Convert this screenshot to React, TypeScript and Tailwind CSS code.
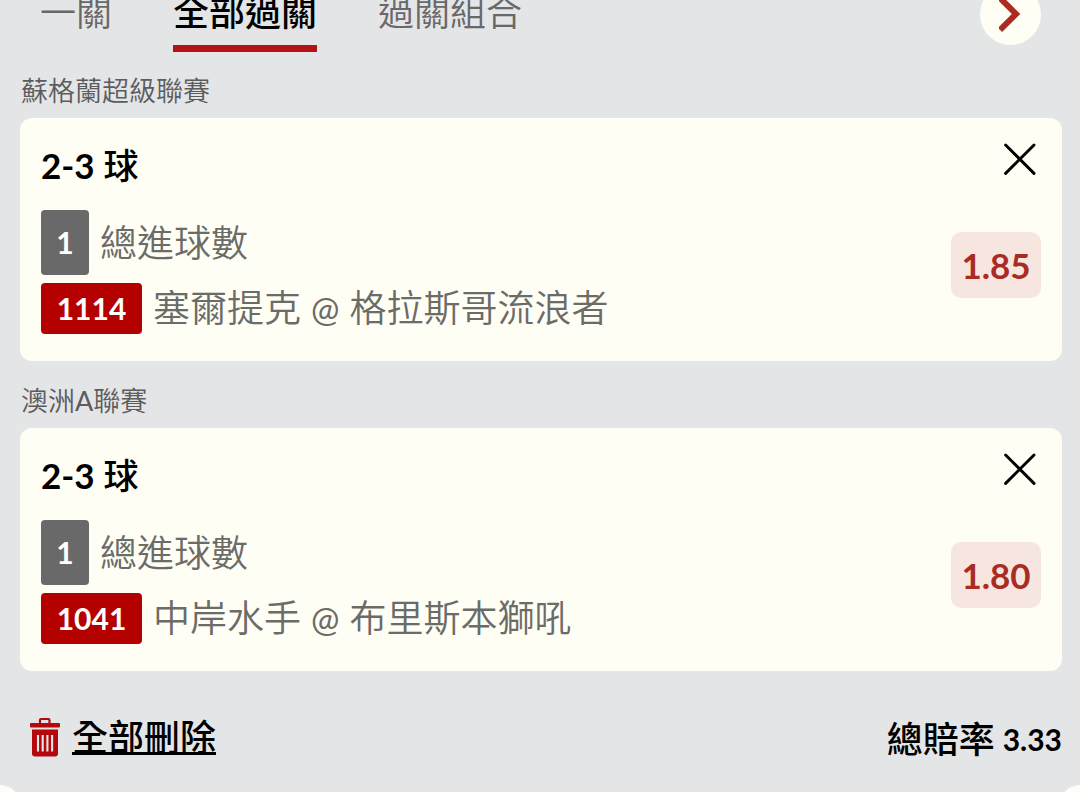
import React from "react";

type Bet = {
  league: React.ReactNode;
  range: string;
  leg: string;
  market: string;
  code: string;
  home: string;
  away: string;
  odds: string;
};

const bets: Bet[] = [
  { league: "蘇格蘭超級聯賽", range: "2-3", leg: "1", market: "總進球數", code: "1114", home: "塞爾提克", away: "格拉斯哥流浪者", odds: "1.85" },
  {
    league: (
      <>
        澳洲<span className="font-normal">A</span>聯賽
      </>
    ),
    range: "2-3",
    leg: "1",
    market: "總進球數",
    code: "1041",
    home: "中岸水手",
    away: "布里斯本獅吼",
    odds: "1.80",
  },
];

const tabs = [
  { label: "一關", active: false },
  { label: "全部過關", active: true },
  { label: "過關組合", active: false },
];

function CloseIcon() {
  return (
    <svg viewBox="0 0 32 32" className="size-8" fill="none" stroke="#000" strokeWidth="2.9" strokeLinecap="round" aria-hidden="true">
      <path d="M1.6 2 30 30.4M30 2 1.6 30.4" />
    </svg>
  );
}

function TrashIcon() {
  return (
    <svg viewBox="0 0 32 40" className="h-10 w-8" aria-hidden="true">
      <path d="M12 7V3.2Q12 2 13.2 2H20.3Q21.5 2 21.5 3.2V7" fill="none" stroke="#b5080c" strokeWidth="2.2" />
      <path d="M3 6H31Q32 6 32 7V9.5Q32 10.5 31 10.5H3Q2 10.5 2 9.5V7Q2 6 3 6Z" fill="#b5080c" />
      <path d="M4 12.5H30V36.5Q30 39.5 27 39.5H7Q4 39.5 4 36.5Z" fill="#b5080c" />
      <path d="M10 18V34.5M14.7 18V34.5M19.4 18V34.5M24.1 18V34.5" stroke="#e4e5e7" strokeWidth="2.1" />
    </svg>
  );
}

function BetCard({ bet }: { bet: Bet }) {
  return (
    <section>
      <h2 className="flex h-[66px] items-center pt-3 pl-px text-[27px] leading-9 font-[350] text-[#5c5c5e]">{bet.league}</h2>
      <article className="flex justify-between rounded-xl bg-[#fffef5] px-[21px] pt-6 pb-[27px]">
        <div>
          <h3 className="text-[35px] leading-[46px] font-medium text-black">
            <span className="font-bold">{bet.range}</span> 球
          </h3>
          <div className="mt-[22px] flex items-center gap-[11px]">
            <span className="flex h-[65px] w-12 items-center justify-center rounded bg-[#696969] text-[30px] font-bold text-white">{bet.leg}</span>
            <span className="text-[37px] leading-[50px] font-[350] text-[#6b6b67]">{bet.market}</span>
          </div>
          <div className="mt-2 flex items-center gap-[11px]">
            <span className="flex h-[51px] w-[101px] items-center justify-center rounded bg-[#b50000] text-[30px] font-bold text-white">{bet.code}</span>
            <span className="text-[37px] leading-[50px] font-[350] text-[#6b6b67]">
              {bet.home} <span className="text-[34px] font-normal">@</span> {bet.away}
            </span>
          </div>
        </div>
        <div className="flex flex-col items-end">
          <button type="button" aria-label="刪除" className="mt-px mr-[5px]">
            <CloseIcon />
          </button>
          <button type="button" className="mt-[57px] flex h-[66px] w-[90px] items-center justify-center rounded-[10px] bg-[#f7e6e0] text-[35px] font-bold text-[#a92c24]">
            {bet.odds}
          </button>
        </div>
      </article>
    </section>
  );
}

export default function App() {
  return (
    <div className="min-h-screen overflow-hidden bg-[#e4e5e7] font-['Lato','Noto_Sans_CJK_TC',sans-serif]">
      <header className="-mt-4 flex items-start justify-between pr-[39px] pl-10">
        <nav className="flex gap-[61px]">
          {tabs.map((tab) => (
            <button
              key={tab.label}
              type="button"
              className={
                tab.active
                  ? "h-[68px] border-b-[7px] border-[#b41217] pb-[6px] text-[36px] leading-[50px] font-medium text-black"
                  : "h-[68px] border-b-[7px] border-transparent pb-[6px] text-[36px] leading-[50px] font-[350] text-[#68686a]"
              }
            >
              {tab.label}
            </button>
          ))}
        </nav>
        <button type="button" aria-label="下一頁" className="flex size-[61px] items-center justify-center rounded-full bg-[#fffef5]">
          <svg viewBox="0 0 24 36" className="h-9 w-6" fill="none" stroke="#ab2a22" strokeWidth="6" aria-hidden="true">
            <path d="M1 1 17 17 1 33" />
          </svg>
        </button>
      </header>
      <main className="flex flex-col gap-px pr-[18px] pl-5">
        {bets.map((bet) => (
          <BetCard key={bet.code} bet={bet} />
        ))}
      </main>
      <footer className="flex items-center justify-between pt-[41px] pr-[18px] pl-7">
        <button type="button" className="flex items-center gap-3">
          <TrashIcon />
          <span className="text-[36px] leading-[50px] font-medium text-black underline decoration-[3px] underline-offset-1 [text-decoration-skip-ink:none]">全部刪除</span>
        </button>
        <p className="flex items-center gap-2 pt-1 text-[36px] leading-[46px] font-medium text-black">
          總賠率 <strong className="text-[30px] font-bold">3.33</strong>
        </p>
      </footer>
      <div className="mt-[23px] -mb-12 flex justify-between" aria-hidden="true">
        <span className="-ml-5 size-10 rounded-full bg-[#fffef5]" />
        <span className="-mr-5 size-10 rounded-full bg-[#fffef5]" />
      </div>
    </div>
  );
}
